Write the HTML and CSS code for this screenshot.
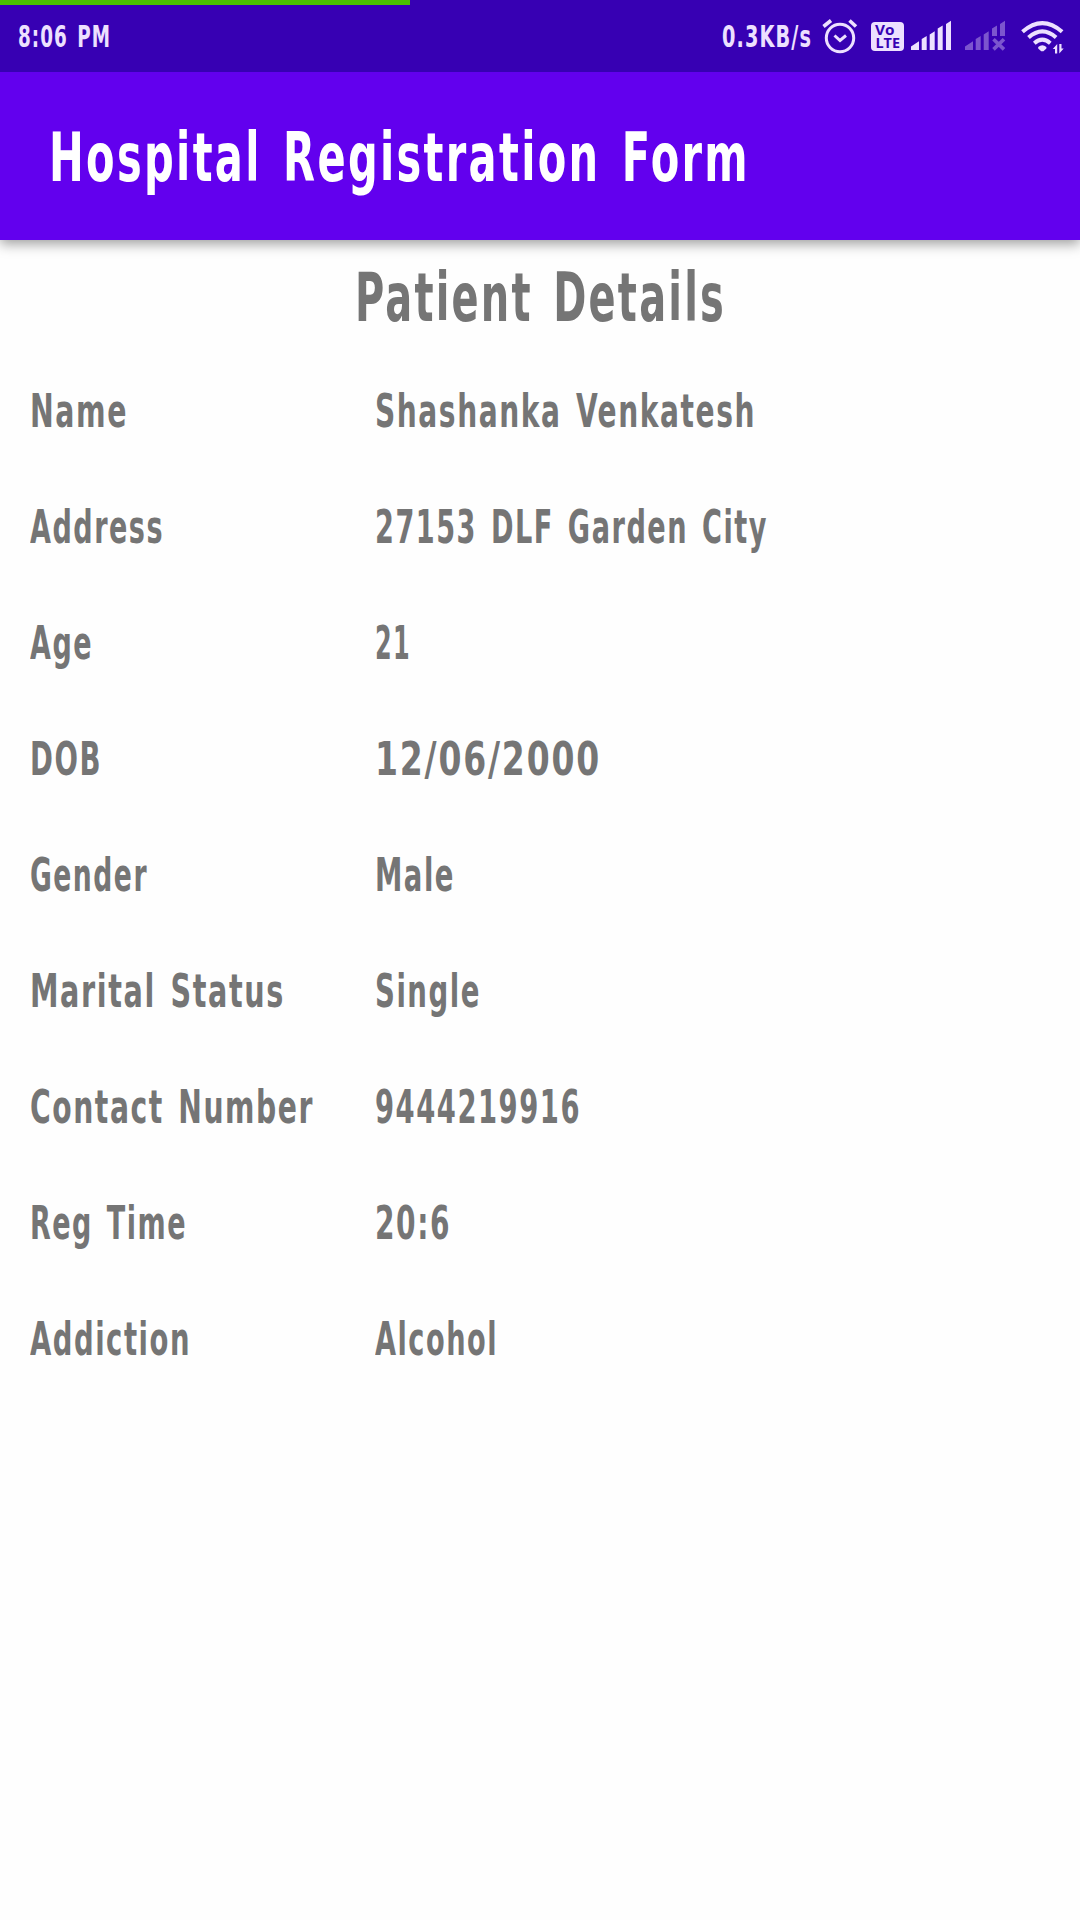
FILE: index.html
```html
<!DOCTYPE html>
<html lang="en">
<head>
<meta charset="utf-8">
<title>Hospital Registration Form</title>
<link rel="stylesheet" href="styles.css">
</head>
<body>
<header class="status">
  <div class="progress"></div>
  <div class="time"><span data-width="93">8:06 PM</span></div>
  <div class="speed"><span data-width="90">0.3KB/s</span></div>
  <svg class="status-icons" width="260" height="72" viewBox="820 0 260 72">
    <g class="line">
      <circle cx="840" cy="38" r="13.7"/>
      <path d="M834.5 35.5l5.5 5 6-5"/>
      <path class="ear" d="M823.5 26.5l7.5-6M849.5 20.5l6.5 6"/>
    </g>
    <rect class="solid" x="871" y="22" width="33" height="29" rx="4"/>
    <text class="volte" x="875" y="35" textLength="19.500" lengthAdjust="spacingAndGlyphs">Vo</text>
    <text class="volte" x="875.500" y="47.600" textLength="24.500" lengthAdjust="spacingAndGlyphs">LTE</text>
    <path class="solid" d="M911 50v-3.500l8-5.300v8.800zM921.700 50v-11l5-3v14zM929.700 50v-15.500l5-3.300v18.800zM937.700 50v-21.500l5-3v24.500zM946 50v-26l5-3.200v29.200z"/>
    <path class="faded" d="M965 50v-3.500l8-5.300v8.800zM975.700 50v-11l5-3v14zM983.700 50v-15.500l5-3.300v18.800zM992 36v-7.500l5-3v10.500zM1000 36v-12l5-3.200v15.200z"/>
    <path class="faded-line" d="M993.500 39.200l10.500 10.200M1004 39.200l-10.500 10.200"/>
    <g class="wave">
      <path d="M1022.500 31.800q19.800-17.300 39.600 0"/>
      <path d="M1028.500 37.600q13.800-12.300 27.600 0"/>
      <path d="M1034.300 43.200q8-7 16 0"/>
    </g>
    <path class="solid" d="M1038.200 47q4.100-3.600 8.200 0v1.500l-3 2.800h-2.200l-3-2.800z"/>
    <path class="solid" d="M1057.200 53.500v-9.500l-4.400 5h2.200v4.500zM1059.300 44v9.500l4.400-5h-2.200v-4.500z"/>
  </svg>
</header>
<div class="appbar"><h1 class="title"><span data-width="701">Hospital Registration Form</span></h1></div>
<main>
  <h2 class="heading"><span data-width="371">Patient Details</span></h2>
  <dl class="details">
    <dt><span data-width="98">Name</span></dt><dd><span data-width="381">Shashanka Venkatesh</span></dd>
    <dt><span data-width="134">Address</span></dt><dd><span data-width="393">27153 DLF Garden City</span></dd>
    <dt><span data-width="63">Age</span></dt><dd><span data-width="36">21</span></dd>
    <dt><span data-width="72">DOB</span></dt><dd><span data-width="226">12/06/2000</span></dd>
    <dt><span data-width="118">Gender</span></dt><dd><span data-width="80">Male</span></dd>
    <dt><span data-width="255">Marital Status</span></dt><dd><span data-width="106">Single</span></dd>
    <dt><span data-width="284">Contact Number</span></dt><dd><span data-width="206">9444219916</span></dd>
    <dt><span data-width="157">Reg Time</span></dt><dd><span data-width="76">20:6</span></dd>
    <dt><span data-width="161">Addiction</span></dt><dd><span data-width="123">Alcohol</span></dd>
  </dl>
</main>
<script src="fit.js"></script>
</body>
</html>
```
FILE: styles.css
```css
* { box-sizing: border-box; margin: 0; padding: 0; }
body {
  width: 1080px;
  height: 1920px;
  overflow: hidden;
  background: #fefefe;
  color: #757575;
  font-family: "DejaVu Sans Condensed", "DejaVu Sans", sans-serif;
  font-weight: bold;
}
[data-width] {
  display: inline-block;
  white-space: nowrap;
  letter-spacing: .05em;
  word-spacing: .1em;
  transform-origin: left center;
}
.status {
  position: relative;
  z-index: 1;
  display: flex;
  height: 72px;
  background: #3700b3;
  color: #ede0ff;
  font-size: 31px;
  line-height: 73px;
}
.progress {
  position: absolute;
  top: 0;
  left: 0;
  width: 410px;
  height: 5px;
  background: #4ac000;
}
.time { width: 92px; margin-left: 18px; }
.speed { width: 90px; margin-left: auto; margin-right: 8px; }
.status-icons { flex: none; }
.line, .wave { fill: none; stroke: #ede0ff; stroke-width: 3; }
.ear { stroke-width: 3.6; }
.wave { stroke-width: 4; }
.solid { fill: #ede0ff; }
.faded { fill: #7c55ce; }
.faded-line { stroke: #7c55ce; stroke-width: 3.6; }
.volte { fill: #3700b3; font: bold 14.5px "Open Sans", sans-serif; }
.appbar {
  height: 168px;
  padding-left: 49px;
  background: #6200ee;
  color: #fff;
  box-shadow: 0 4px 12px rgba(0, 0, 0, .38);
}
.title { font-size: 67px; line-height: 173px; }
.heading {
  height: 113px;
  padding-left: 355px;
  font-size: 67px;
  line-height: 117px;
}
.details {
  display: grid;
  grid-template-columns: 345px 1fr;
  grid-auto-rows: 116px;
  padding-left: 30px;
  font-size: 46.6px;
  line-height: 116px;
}
```
FILE: fit.js
```javascript
document.querySelectorAll('[data-width]').forEach(function (el) {
  var range = document.createRange();
  range.selectNodeContents(el);
  var natural = range.getBoundingClientRect().width;
  el.style.transform = 'scaleX(' + el.dataset.width / natural + ')';
});
```
